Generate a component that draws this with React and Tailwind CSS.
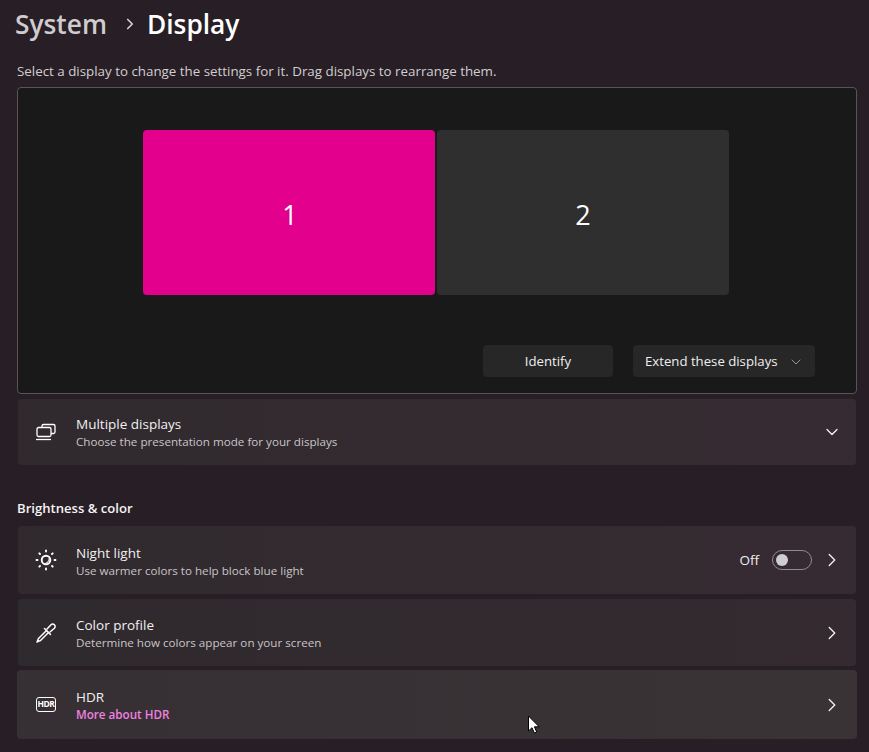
import { ChevronDown, ChevronRight } from "lucide-react";

function Row({ icon, title, sub, subClass = "text-[#c9c5c8]", right, className = "", textClass = "" }) {
  return (
    <div className={`flex items-center rounded-[4px] ${className}`}>
      <div className="w-[24px] h-[24px] flex items-center justify-center mr-[18px] text-white">{icon}</div>
      <div className={`flex-1 flex flex-col ${textClass}`}>
        <span className="text-[13.5px] leading-[18px] text-[#f2f0f1]">{title}</span>
        <span className="text-[11.65px] leading-[17px]">
          <span className={subClass}>{sub}</span>
        </span>
      </div>
      {right}
    </div>
  );
}

function DisplaysIcon() {
  return (
    <svg width="22" height="20" viewBox="0 0 22 20" fill="none" stroke="currentColor" strokeWidth="1.3">
      <path d="M7 5V4a1.500 1.500 0 0 1 1.500-1.500h10A1.500 1.500 0 0 1 20 4v6a1.500 1.500 0 0 1-1.500 1.500H16" />
      <rect x="2" y="5.500" width="14" height="9" rx="1.500" />
      <path d="M1 17.500h15" />
    </svg>
  );
}

function SunIcon() {
  return (
    <svg width="22" height="22" viewBox="0 0 22 22" fill="none" stroke="currentColor" strokeWidth="1.9" strokeLinecap="round">
      <circle cx="11" cy="11" r="4.300" />
      <path d="M13.500 8.500a4 4 0 0 1-5.500 5.500 4.500 4.500 0 0 0 5.500-5.500Z" fill="currentColor" stroke="none" />
      <path d="M11 1.500v1M11 19.500v1M1.500 11h1M19.500 11h1M4.300 4.300l.7.7M17 17l.7.7M4.300 17.700l.7-.7M17 5l.7-.7" />
    </svg>
  );
}

function DropperIcon() {
  return (
    <svg width="22" height="22" viewBox="0 0 22 22" fill="none" stroke="currentColor" strokeWidth="1.500" strokeLinejoin="round" strokeLinecap="round">
      <path d="M11.500 8.500l-8 8c-.5.5-.5 1-.6 1.600L2 20l1.900-.9c.6-.1 1.100-.1 1.600-.6l8-8" />
      <path d="M9.500 6.500l6 6" />
      <path d="M12 7l4-4.200a2.400 2.400 0 0 1 3.400 3.400L15 10" />
    </svg>
  );
}

function HdrIcon() {
  return (
    <div className="w-[20px] h-[15px] rounded-[3px] border-[1.5px] border-white flex items-center justify-center">
      <span className="text-[8.5px] leading-none font-bold tracking-[-0.5px] text-white">HDR</span>
    </div>
  );
}

function Chevron() {
  return <ChevronRight size={22} strokeWidth={1.5} className="text-[#f0eef0]" />;
}

export default function App() {
  return (
    <div className="relative w-[869px] h-[752px] overflow-hidden bg-[#281e25] font-['Open_Sans','Noto_Sans',sans-serif] pl-[17px] pr-[12px]">
      {/* Breadcrumb */}
      <div className="h-[50px] flex items-center ml-[-2px] text-[26.3px] font-semibold">
        <span className="text-[#cfcbce]">System</span>
        <ChevronRight size={18} strokeWidth={2.2} className="ml-[14px] mr-[8px] mb-[3px] text-[#d6d2d5]" />
        <span className="text-white">Display</span>
      </div>

      <p className="mt-[12px] h-[25px] text-[13.35px] leading-[18px] text-[#d2ced1]">
        Select a display to change the settings for it. Drag displays to rearrange them.
      </p>

      {/* Display arrangement */}
      <div className="h-[307px] rounded-[4px] border border-[#5b5357] bg-[#191919] pt-[42px]">
        <div className="flex justify-center gap-[2px] pr-[2px]">
          <div className="w-[292px] h-[165px] rounded-[4px] bg-[#e3008c] flex items-center justify-center pt-[6px] pl-[2px] text-[27px] text-white">1</div>
          <div className="w-[292px] h-[165px] rounded-[4px] bg-[#2f2f2f] flex items-center justify-center pt-[6px] text-[27px] text-white">2</div>
        </div>
        <div className="flex justify-end gap-[20px] mt-[50px] pr-[41px]">
          <button className="w-[130px] h-[32px] rounded-[4px] bg-[#272727] pt-[1px] text-[13.2px] text-[#f0eef0]">Identify</button>
          <button className="w-[182px] h-[32px] rounded-[4px] bg-[#272727] pt-[1px] text-[13.2px] text-[#f0eef0] flex items-center pl-[12px]">
            Extend these displays
            <ChevronDown size={16} strokeWidth={1.2} className="ml-[10px] text-[#b0b0b0]" />
          </button>
        </div>
      </div>

      <Row
        className="mt-[5px] mx-[1px] h-[66px] pl-[16px] pr-[13px] bg-gradient-to-r from-[#302a2e] to-[#362b32]"
        icon={<DisplaysIcon />}
        title="Multiple displays"
        sub="Choose the presentation mode for your displays"
        right={<ChevronDown size={20} strokeWidth={1.6} className="text-[#f0eef0] mr-[1px]" />}
      />

      <h2 className="mt-[34px] h-[27px] text-[13.1px] leading-[18px] font-semibold text-[#f5f3f4]">Brightness &amp; color</h2>

      <div className="flex flex-col">
        <Row
          className="mx-[1px] h-[68px] pl-[16px] pr-[13px] bg-gradient-to-r from-[#302a2e] to-[#362b32]"
          textClass="pt-[3px]"
          icon={<SunIcon />}
          title="Night light"
          sub="Use warmer colors to help block blue light"
          right={
            <div className="flex items-center">
              <span className="text-[13.5px] text-[#f0eef0] mr-[13px]">Off</span>
              <div className="w-[40px] h-[20px] rounded-full border border-[#94898f] flex items-center pl-[3px] mr-[9px]">
                <div className="w-[12px] h-[12px] rounded-full bg-[#d0cdd0]" />
              </div>
              <Chevron />
            </div>
          }
        />
        <Row
          className="mt-[5px] mx-[1px] h-[67px] pl-[16px] pr-[13px] bg-gradient-to-r from-[#2f2a2d] to-[#342a30]"
          textClass="pt-[2px]"
          icon={<DropperIcon />}
          title="Color profile"
          sub="Determine how colors appear on your screen"
          right={<Chevron />}
        />
        <Row
          className="mt-[4px] h-[69px] pl-[17px] pr-[14px] bg-gradient-to-r from-[#362f33] to-[#3a3336]"
          textClass="pt-[2px]"
          icon={<HdrIcon />}
          title="HDR"
          sub="More about HDR"
          subClass="text-[#ee82e0] font-semibold"
          right={<Chevron />}
        />
      </div>

      {/* Mouse pointer */}
      <svg className="absolute left-[527px] top-[715px]" width="13" height="20" viewBox="0 0 13 20">
        <path d="M1.500 1v15l3.500-3.300 2.300 5.300 2.400-1-2.300-5.200h4.800Z" fill="#fff" stroke="#000" strokeWidth="1" />
      </svg>
    </div>
  );
}
